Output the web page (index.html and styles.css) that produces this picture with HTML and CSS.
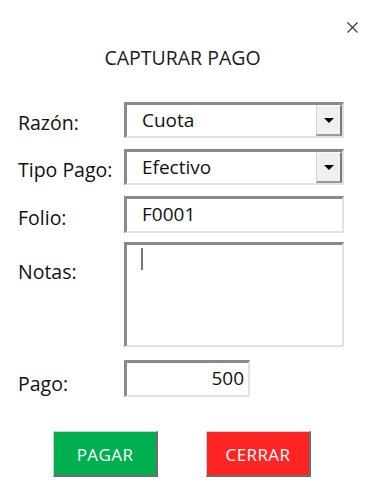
FILE: index.html
```html
<!DOCTYPE html>
<html lang="es">
<head>
<meta charset="utf-8">
<title>Capturar Pago</title>
<link rel="stylesheet" href="styles.css">
</head>
<body>
<div class="dialog">
  <div class="topbar">
    <svg class="close" width="11" height="11" viewBox="0 0 11 11" aria-label="Cerrar">
      <path d="M0.5 0.5 L10.5 10.5 M10.5 0.5 L0.5 10.5" stroke="#333" stroke-width="1.1" fill="none"/>
    </svg>
  </div>
  <h1 class="title">CAPTURAR PAGO</h1>
  <div class="form">
    <div class="row row-combo">
      <label class="label">Razón:</label>
      <div class="field combo">
        <span class="value">Cuota</span>
        <span class="drop"><span class="tri"></span></span>
      </div>
    </div>
    <div class="row row-combo">
      <label class="label">Tipo Pago:</label>
      <div class="field combo">
        <span class="value">Efectivo</span>
        <span class="drop"><span class="tri"></span></span>
      </div>
    </div>
    <div class="row row-text">
      <label class="label">Folio:</label>
      <div class="field text"><span class="value">F0001</span></div>
    </div>
    <div class="row row-notes">
      <label class="label">Notas:</label>
      <div class="field notes"><span class="caret"></span></div>
    </div>
    <div class="row row-pago">
      <label class="label">Pago:</label>
      <div class="field text amount"><span class="value">500</span></div>
    </div>
  </div>
  <div class="actions">
    <button class="btn pagar">PAGAR</button>
    <button class="btn cerrar">CERRAR</button>
  </div>
</div>
</body>
</html>
```

FILE: styles.css
```css
* { box-sizing: border-box; }
html, body { margin: 0; padding: 0; background: #fff; }
body {
  font-family: "Open Sans", "Liberation Sans", sans-serif;
  color: #111;
  width: 375px;
  height: 500px;
  overflow: hidden;
}
.dialog { display: flex; flex-direction: column; }
.topbar {
  height: 25px;
  margin-top: 22px;
  display: flex;
  justify-content: flex-end;
  padding-right: 17px;
}
.close { display: block; }
.title {
  margin: 0;
  height: 55px;
  font-size: 19.5px;
  font-weight: 400;
  text-align: center;
  padding-right: 10px;
  line-height: 22px;
  color: #1a1a1a;
}
.form {
  display: flex;
  flex-direction: column;
  padding-left: 18px;
}
.row { display: flex; align-items: center; }
.row-combo { height: 36px; margin-bottom: 11px; }
.row-text { height: 37px; margin-bottom: 9px; }
.row-notes { height: 105px; margin-bottom: 13px; align-items: flex-start; }
.row-pago { height: 37px; }
.label {
  width: 106px;
  flex: none;
  font-size: 19.5px;
  line-height: 24px;
  padding-top: 6px;
  color: #111;
}
.row-notes .label { padding-top: 18px; }
.row-pago .label { padding-top: 10px; }
.field {
  height: 100%;
  width: 220px;
  background: #fff;
  border-top: 3px solid #8a8a8a;
  border-left: 3px solid #8a8a8a;
  border-right: 2px solid #e2e2e2;
  border-bottom: 2px solid #e2e2e2;
  display: flex;
  align-items: center;
}
.value {
  font-size: 19px;
  line-height: 24px;
  padding-left: 15px;
  color: #111;
}
.combo { position: relative; }
.combo .value { flex: 1; margin-top: -2px; }
.text .value { margin-top: -2px; }
.drop {
  width: 26px;
  height: 31px;
  align-self: flex-start;
  background: #f0f0f0;
  border-left: 1px solid #d4d4d4;
  border-top: 1px solid #fafafa;
  border-right: 2px solid #7a7a7a;
  border-bottom: 2px solid #9a9a9a;
  display: flex;
  align-items: center;
  justify-content: center;
}
.tri {
  width: 0;
  height: 0;
  border-left: 5px solid transparent;
  border-right: 5px solid transparent;
  border-top: 5px solid #000;
}
.notes { align-items: flex-start; }
.caret {
  display: block;
  width: 2px;
  height: 22px;
  margin-left: 14px;
  margin-top: 3px;
  background: #777;
}
.amount { width: 126px; justify-content: flex-end; }
.amount .value { padding-left: 0; padding-right: 4px; }
.actions {
  display: flex;
  gap: 48px;
  padding-left: 53px;
  margin-top: 34px;
}
.btn {
  width: 105px;
  height: 46px;
  font-family: "Open Sans", "Liberation Sans", sans-serif;
  font-size: 17px;
  letter-spacing: 0.4px;
  color: #fff;
  border-top: 1px solid #cfcfcf;
  border-left: 1px solid #cfcfcf;
  border-right: 2px solid #6e6e6e;
  border-bottom: 2px solid #6e6e6e;
  padding: 0;
  padding-top: 2px;
}
.pagar { background: #00b050; }
.cerrar { background: #fe2424; }
```
